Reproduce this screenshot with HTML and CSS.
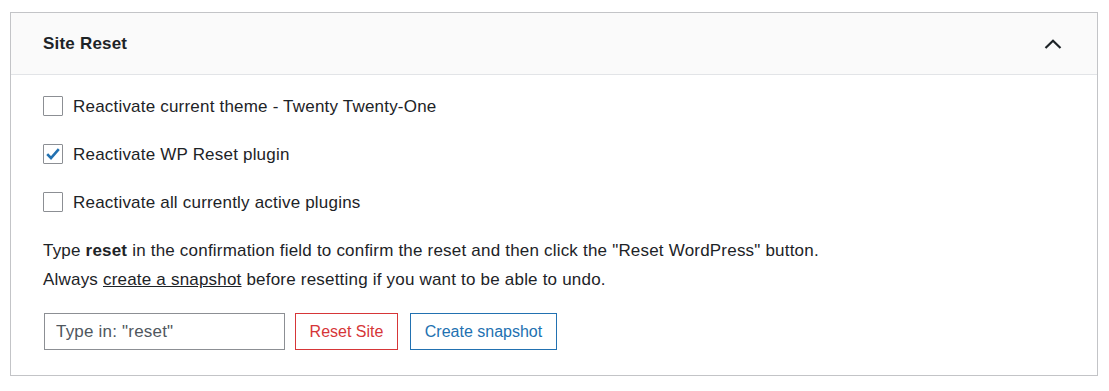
FILE: index.html
```html
<!DOCTYPE html>
<html>
<head>
<meta charset="utf-8">
<link rel="stylesheet" href="styles.css">
</head>
<body>
<div class="card">
  <div class="card-header">
    <h2 class="title">Site Reset</h2>
    <svg class="chevron" width="18" height="10" viewBox="0 0 18 10"><path d="M1.5 9 L9 1.8 L16.5 9" fill="none" stroke="#1d2327" stroke-width="2.2"/></svg>
  </div>
  <div class="card-body">
    <label class="option"><span class="box"></span><span class="label-text">Reactivate current theme - Twenty Twenty-One</span></label>
    <label class="option"><span class="box checked"><svg width="18" height="18" viewBox="0 0 18 18"><path d="M3.2 9.2 L7 13 L14.8 4.2" fill="none" stroke="#2271b1" stroke-width="2.6"/></svg></span><span class="label-text">Reactivate WP Reset plugin</span></label>
    <label class="option"><span class="box"></span><span class="label-text">Reactivate all currently active plugins</span></label>
    <div class="info">
      <p>Type <b>reset</b> in the confirmation field to confirm the reset and then click the "Reset WordPress" button.</p>
      <p>Always <a href="#">create a snapshot</a> before resetting if you want to be able to undo.</p>
    </div>
    <div class="actions">
      <input class="confirm" type="text" placeholder="Type in: &quot;reset&quot;">
      <button class="btn btn-reset">Reset Site</button>
      <button class="btn btn-snap">Create snapshot</button>
    </div>
  </div>
</div>
</body>
</html>
```

FILE: styles.css
```css
* { box-sizing: border-box; }
html, body { margin: 0; padding: 0; background: #ffffff; }
body {
  font-family: "Liberation Sans", Arial, sans-serif;
  font-size: 17px;
  letter-spacing: 0.2px;
  color: #1d2327;
}
.card {
  margin: 12px 11px 0 10px;
  border: 1px solid #c3c4c7;
  background: #ffffff;
}
.card-header {
  height: 62px;
  background: #fafafa;
  border-bottom: 1px solid #e2e4e7;
  display: flex;
  align-items: center;
  justify-content: space-between;
  padding: 0 35px 0 32px;
}
.title {
  margin: 0;
  font-size: 17px;
  font-weight: bold;
  line-height: 20px;
  padding-top: 1px;
}
.chevron { display: block; margin-top: 0; }
.card-body {
  padding: 21px 32px 25px 32px;
}
.option {
  display: flex;
  align-items: center;
  height: 20px;
  margin-bottom: 28px;
  line-height: 20px;
}
.option:nth-of-type(3) { margin-bottom: 24px; }
.label-text { padding-top: 2px; }
.box {
  width: 20px;
  height: 20px;
  border: 1px solid #8c8f94;
  border-radius: 1px;
  background: #fff;
  margin-right: 10px;
  display: flex;
  align-items: center;
  justify-content: center;
  flex: none;
}
.box svg { display: block; }
.info p {
  margin: 0;
  line-height: 29px;
}
.info a { color: #1d2327; text-decoration: underline; }
.actions {
  display: flex;
  align-items: center;
  margin-top: 19px;
  padding-left: 1px;
}
.confirm {
  width: 241px;
  height: 37px;
  border: 1px solid #8c8f94;
  border-radius: 0;
  padding: 0 11px;
  font-family: inherit;
  font-size: 17px;
  letter-spacing: 0.2px;
  color: #2c3338;
  margin: 0 10px 0 0;
}
.confirm::placeholder { color: #50575e; opacity: 1; }
.btn {
  height: 37px;
  background: #ffffff;
  font-family: inherit;
  font-size: 16px;
  letter-spacing: 0;
  border-radius: 0;
  padding: 0;
  margin: 0;
}
.btn-reset {
  width: 103px;
  border: 1px solid #d63638;
  color: #d63638;
  margin-right: 12px;
}
.btn-snap {
  width: 147px;
  border: 1px solid #2271b1;
  color: #2271b1;
}
```
